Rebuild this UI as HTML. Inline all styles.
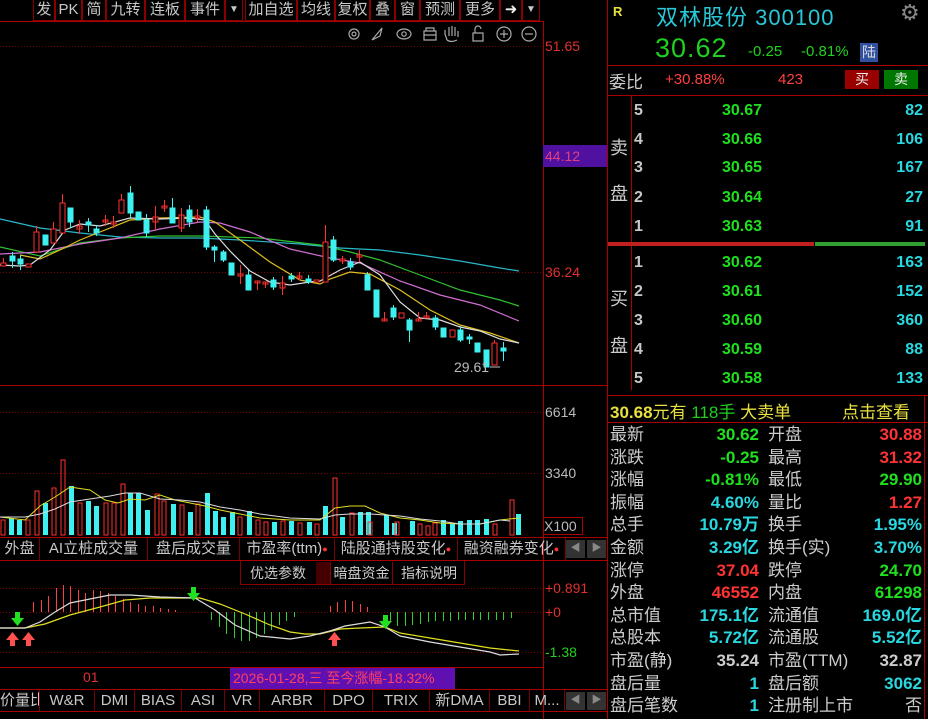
<!DOCTYPE html>
<html><head><meta charset="utf-8"><style>
*{margin:0;padding:0;box-sizing:border-box}
body{width:928px;height:719px;background:#000;overflow:hidden;position:relative;font-family:"Liberation Sans","Noto Sans CJK SC",sans-serif;color:#c8c8c8}
.a{position:absolute;white-space:nowrap}
.tb{position:absolute;top:0;height:21px;border:1px solid #8a0000;border-top:none;color:#c8c8c8;font-size:15px;line-height:20px;text-align:center}
.tab{position:absolute;height:22px;border-right:1px solid #700;font-size:15px;line-height:22px;text-align:center;color:#c8c8c8;white-space:nowrap;overflow:hidden}
.r{position:absolute;font-size:16px;line-height:22px;white-space:nowrap;font-weight:bold}
.g{color:#1ee01e}.rd{color:#ff3333}.c{color:#28d8e0}.w{color:#c8c8c8;font-weight:normal}.y{color:#e8e040}
</style></head><body>
<!-- toolbar -->
<div class="tb" style="left:33px;width:22px">发</div>
<div class="tb" style="left:55px;width:27px">PK</div>
<div class="tb" style="left:82px;width:24px">简</div>
<div class="tb" style="left:106px;width:39px">九转</div>
<div class="tb" style="left:145px;width:40px">连板</div>
<div class="tb" style="left:185px;width:40px">事件</div>
<div class="tb" style="left:225px;width:18px;font-size:10px">▼</div>
<div class="tb" style="left:245px;width:52px">加自选</div>
<div class="tb" style="left:297px;width:38px">均线</div>
<div class="tb" style="left:335px;width:35px">复权</div>
<div class="tb" style="left:370px;width:25px">叠</div>
<div class="tb" style="left:395px;width:25px">窗</div>
<div class="tb" style="left:420px;width:40px">预测</div>
<div class="tb" style="left:460px;width:40px">更多</div>
<div class="tb" style="left:500px;width:22px;color:#eee">➜</div>
<div class="tb" style="left:522px;width:18px;font-size:10px">▼</div>
<svg class="a" style="left:0;top:0" width="928" height="719">
<line x1="0" y1="21.5" x2="543" y2="21.5" stroke="#a00" />
<line x1="543.5" y1="21" x2="543.5" y2="719" stroke="#a00"/>
<line x1="607.5" y1="0" x2="607.5" y2="719" stroke="#a00"/>
<line x1="0" y1="385.5" x2="607" y2="385.5" stroke="#a00"/>
<line x1="0" y1="537.5" x2="607" y2="537.5" stroke="#a00"/>
<line x1="0" y1="560.5" x2="607" y2="560.5" stroke="#a00"/>
<line x1="0" y1="667.5" x2="543" y2="667.5" stroke="#a00"/>
<line x1="0" y1="689.5" x2="607" y2="689.5" stroke="#a00"/>
<line x1="0" y1="711.5" x2="607" y2="711.5" stroke="#a00"/>
<g stroke="#700" stroke-dasharray="1,2">
<line x1="0" y1="46.5" x2="543" y2="46.5"/><line x1="0" y1="272.5" x2="543" y2="272.5"/>
<line x1="0" y1="412.5" x2="543" y2="412.5"/><line x1="0" y1="473.5" x2="543" y2="473.5"/>
<line x1="0" y1="588.5" x2="543" y2="588.5"/><line x1="0" y1="612.5" x2="543" y2="612.5"/><line x1="0" y1="652.5" x2="543" y2="652.5"/>
</g>
<g stroke="#aaa" fill="none" stroke-width="1.2">
<circle cx="354" cy="34" r="5"/><circle cx="354" cy="34" r="2"/>
<path d="M372 40 L382 28 L380 36 Z"/>
<ellipse cx="404" cy="34" rx="7" ry="5"/><circle cx="404" cy="34" r="2.2"/>
<path d="M424 31h12v9h-12z M426 31v-3h8v3 M424 35h12"/>
<path d="M447 40 l-2-6 v-4 M449 36v-9 M452 36v-10 M455 36v-9 M458 37v-6 M447 40 q4 3 10 0"/>
<path d="M473 33h10v8h-10z M475 33v-4a3 3 0 0 1 6 0"/>
<circle cx="504" cy="34" r="7"/><path d="M500 34h8M504 30v8"/>
<circle cx="529" cy="34" r="7"/><path d="M525 34h8"/>
</g>
<g fill="none" stroke-width="1.2">
<polyline stroke="#2ab8c8" points="0,219 40,228 80,233 120,237 160,238 200,238 240,240 300,244 340,248 380,250 420,255 460,261 500,268 519,271"/>
<polyline stroke="#30c030" points="0,247 40,256 80,243 120,238 160,236 200,236 260,238 320,245 350,252 380,260 420,275 460,290 500,300 519,306"/>
<polyline stroke="#d070d0" points="0,254 40,252 80,244 120,238 160,229 200,222 220,223 250,232 290,249 330,258 360,263 400,281 440,295 480,305 519,321"/>
<polyline stroke="#e0c020" points="20,255 40,259 60,250 80,240 100,232 130,220 160,218 200,217 215,222 240,240 270,262 300,280 320,284 330,279 350,272 370,274 400,290 430,310 460,325 490,333 519,343"/>
<polyline stroke="#ddd" points="0,265 20,266 30,265 50,250 65,230 80,224 100,226 130,218 160,219 190,218 205,220 215,234 230,251 250,271 270,282 290,285 310,282 320,281 340,270 360,262 380,275 400,302 420,318 440,320 460,327 480,331 500,339 519,343"/>
</g>
<g stroke-width="1">
<g fill="#000" stroke="#ff3030">
<rect x="1" y="263" width="5" height="3"/><line x1="3.5" y1="258" x2="3.5" y2="263"/>
<rect x="26" y="264" width="5" height="3"/>
<rect x="34" y="232" width="5" height="20"/><line x1="36.5" y1="226" x2="36.5" y2="232"/>
<rect x="51" y="229" width="5" height="14"/><line x1="53.5" y1="222" x2="53.5" y2="229"/>
<rect x="60" y="203" width="5" height="30"/><line x1="62.5" y1="194" x2="62.5" y2="203"/>
<rect x="77" y="226" width="5" height="3"/><line x1="79.5" y1="220" x2="79.5" y2="234"/>
<rect x="103" y="220" width="5" height="2"/><line x1="105.5" y1="215" x2="105.5" y2="226"/>
<rect x="111" y="222" width="5" height="2"/><line x1="113.5" y1="216" x2="113.5" y2="228"/>
<rect x="119" y="200" width="5" height="13"/><line x1="121.5" y1="194" x2="121.5" y2="200"/>
<rect x="153" y="217" width="5" height="5"/><line x1="155.5" y1="206" x2="155.5" y2="230"/>
<rect x="162" y="206" width="5" height="2"/><line x1="164.5" y1="200" x2="164.5" y2="212"/>
<rect x="179" y="215" width="5" height="13"/><line x1="181.5" y1="208" x2="181.5" y2="232"/>
<rect x="195" y="216" width="5" height="2"/><line x1="197.5" y1="209" x2="197.5" y2="222"/>
<rect x="238" y="274" width="5" height="2"/><line x1="240.5" y1="265" x2="240.5" y2="284"/>
<rect x="255" y="281" width="5" height="2"/><line x1="257.5" y1="281" x2="257.5" y2="290"/>
<rect x="263" y="282" width="5" height="2"/><line x1="265.5" y1="282" x2="265.5" y2="288"/>
<rect x="280" y="283" width="5" height="5"/><line x1="282.5" y1="276" x2="282.5" y2="295"/>
<rect x="297" y="276" width="5" height="2"/><line x1="299.5" y1="272" x2="299.5" y2="280"/>
<rect x="314" y="280" width="5" height="2"/>
<rect x="323" y="242" width="5" height="40"/><line x1="325.5" y1="225" x2="325.5" y2="242"/>
<rect x="340" y="259" width="5" height="2"/><line x1="342.5" y1="256" x2="342.5" y2="264"/>
<rect x="357" y="255" width="5" height="2"/><line x1="359.5" y1="250" x2="359.5" y2="262"/>
<rect x="382" y="319" width="5" height="2"/><line x1="384.5" y1="312" x2="384.5" y2="321"/>
<rect x="399" y="313" width="5" height="5"/>
<rect x="416" y="319" width="5" height="2"/><line x1="418.5" y1="312" x2="418.5" y2="321"/>
<rect x="424" y="316" width="5" height="2"/><line x1="426.5" y1="312" x2="426.5" y2="318"/>
<rect x="450" y="330" width="5" height="7"/>
<rect x="492" y="343" width="5" height="22"/><line x1="494.5" y1="340" x2="494.5" y2="343"/>
</g>
<g fill="#3ef0f0" stroke="#3ef0f0">
<rect x="10" y="256" width="5" height="5"/><line x1="12.5" y1="252" x2="12.5" y2="268"/>
<rect x="18" y="259" width="5" height="5"/><line x1="20.5" y1="255" x2="20.5" y2="270"/>
<rect x="43" y="235" width="5" height="10"/>
<rect x="68" y="208" width="5" height="14"/><line x1="70.5" y1="208" x2="70.5" y2="228"/>
<rect x="86" y="222" width="5" height="3"/><line x1="88.5" y1="218" x2="88.5" y2="232"/>
<rect x="94" y="229" width="5" height="4"/><line x1="96.5" y1="225" x2="96.5" y2="236"/>
<rect x="128" y="193" width="5" height="20"/><line x1="130.5" y1="186" x2="130.5" y2="218"/>
<rect x="136" y="212" width="5" height="8"/>
<rect x="144" y="220" width="5" height="13"/><line x1="146.5" y1="214" x2="146.5" y2="237"/>
<rect x="170" y="208" width="5" height="15"/><line x1="172.5" y1="198" x2="172.5" y2="223"/>
<rect x="187" y="210" width="5" height="12"/><line x1="189.5" y1="205" x2="189.5" y2="227"/>
<rect x="204" y="210" width="5" height="37"/><line x1="206.5" y1="206" x2="206.5" y2="250"/>
<rect x="212" y="247" width="5" height="3"/><line x1="214.5" y1="245" x2="214.5" y2="262"/>
<rect x="221" y="252" width="5" height="8"/><line x1="223.5" y1="250" x2="223.5" y2="262"/>
<rect x="229" y="263" width="5" height="12"/>
<rect x="246" y="275" width="5" height="15"/><line x1="248.5" y1="270" x2="248.5" y2="290"/>
<rect x="271" y="280" width="5" height="7"/><line x1="273.5" y1="277" x2="273.5" y2="290"/>
<rect x="289" y="276" width="5" height="3"/><line x1="291.5" y1="273" x2="291.5" y2="282"/>
<rect x="306" y="279" width="5" height="3"/><line x1="308.5" y1="275" x2="308.5" y2="284"/>
<rect x="331" y="240" width="5" height="20"/><line x1="333.5" y1="236" x2="333.5" y2="262"/>
<rect x="348" y="262" width="5" height="5"/><line x1="350.5" y1="258" x2="350.5" y2="270"/>
<rect x="365" y="275" width="5" height="15"/><line x1="367.5" y1="272" x2="367.5" y2="290"/>
<rect x="374" y="290" width="5" height="27"/>
<rect x="391" y="308" width="5" height="9"/><line x1="393.5" y1="305" x2="393.5" y2="320"/>
<rect x="407" y="320" width="5" height="10"/><line x1="409.5" y1="318" x2="409.5" y2="342"/>
<rect x="433" y="318" width="5" height="9"/><line x1="435.5" y1="315" x2="435.5" y2="330"/>
<rect x="441" y="328" width="5" height="9"/>
<rect x="458" y="330" width="5" height="10"/><line x1="460.5" y1="326" x2="460.5" y2="342"/>
<rect x="467" y="337" width="5" height="2"/><line x1="469.5" y1="334" x2="469.5" y2="344"/>
<rect x="475" y="343" width="5" height="9"/>
<rect x="484" y="350" width="5" height="17"/>
<rect x="501" y="348" width="5" height="3"/><line x1="503.5" y1="342" x2="503.5" y2="361"/>
</g>
</g>
<text x="454" y="372" fill="#bbb" font-size="14" font-family="Liberation Sans">29.61</text>
<line x1="490" y1="367" x2="500" y2="367" stroke="#bbb"/>
<g fill="#3ef0f0">
<rect x="9" y="518" width="5" height="17"/><rect x="17" y="520" width="5" height="15"/><rect x="43" y="503" width="5" height="32"/><rect x="69" y="486" width="5" height="49"/><rect x="86" y="501" width="5" height="34"/><rect x="94" y="506" width="5" height="29"/><rect x="128" y="493" width="5" height="42"/><rect x="136" y="493" width="5" height="42"/><rect x="145" y="510" width="5" height="25"/><rect x="171" y="504" width="5" height="31"/><rect x="188" y="512" width="5" height="23"/><rect x="205" y="493" width="5" height="42"/><rect x="213" y="511" width="5" height="24"/><rect x="221" y="517" width="5" height="18"/><rect x="230" y="512" width="5" height="23"/><rect x="247" y="511" width="5" height="24"/><rect x="272" y="522" width="5" height="13"/><rect x="289" y="521" width="5" height="14"/><rect x="307" y="522" width="5" height="13"/><rect x="323" y="506" width="5" height="29"/><rect x="340" y="517" width="5" height="18"/><rect x="358" y="512" width="5" height="23"/><rect x="366" y="512" width="5" height="23"/><rect x="384" y="515" width="5" height="20"/><rect x="392" y="523" width="5" height="12"/><rect x="410" y="521" width="5" height="14"/><rect x="441" y="520" width="5" height="15"/><rect x="450" y="524" width="5" height="11"/><rect x="458" y="521" width="5" height="14"/><rect x="467" y="520" width="5" height="15"/><rect x="475" y="520" width="5" height="15"/><rect x="484" y="519" width="5" height="16"/><rect x="516" y="514" width="5" height="21"/>
</g>
<g fill="none" stroke="#ff3030">
<rect x="1" y="520" width="4" height="15"/><rect x="26" y="520" width="4" height="15"/><rect x="35" y="491" width="4" height="44"/><rect x="52" y="488" width="4" height="47"/><rect x="61" y="460" width="4" height="75"/><rect x="78" y="503" width="4" height="32"/><rect x="104" y="503" width="4" height="32"/><rect x="112" y="503" width="4" height="32"/><rect x="121" y="484" width="4" height="51"/><rect x="155" y="494" width="4" height="41"/><rect x="162" y="501" width="4" height="34"/><rect x="180" y="505" width="4" height="30"/><rect x="196" y="504" width="4" height="31"/><rect x="238" y="517" width="4" height="18"/><rect x="256" y="520" width="4" height="15"/><rect x="264" y="522" width="4" height="13"/><rect x="281" y="521" width="4" height="14"/><rect x="298" y="523" width="4" height="12"/><rect x="315" y="524" width="4" height="11"/><rect x="333" y="478" width="4" height="57"/><rect x="350" y="513" width="4" height="22"/><rect x="368" y="522" width="4" height="13"/><rect x="395" y="522" width="4" height="13"/><rect x="418" y="524" width="4" height="11"/><rect x="426" y="526" width="4" height="9"/><rect x="433" y="523" width="4" height="12"/><rect x="493" y="524" width="4" height="11"/><rect x="510" y="500" width="4" height="35"/>
</g>
<g fill="none" stroke-width="1">
<polyline stroke="#e0e020" points="0,517 25,520 40,506 55,497 70,487 90,490 105,500 118,503 130,499 145,500 160,495 175,500 190,503 205,506 220,510 240,514 260,518 290,520 320,520 335,508 350,506 365,506 380,513 400,518 420,520 440,523 460,524 480,524 500,520 519,518"/>
<polyline stroke="#ddd" points="0,517 25,517 40,514 55,509 70,502 90,499 110,496 125,493 140,493 160,499 180,500 200,502 220,507 240,510 260,514 290,518 320,519 335,515 350,514 370,514 400,516 420,519 440,521 460,524 480,524 500,520 510,521"/>
</g>
<g stroke="#ff4040">
<line x1="33.5" y1="612" x2="33.5" y2="602"/><line x1="41.5" y1="612" x2="41.5" y2="600"/><line x1="48.5" y1="612" x2="48.5" y2="596"/><line x1="56.5" y1="612" x2="56.5" y2="588"/><line x1="63.5" y1="612" x2="63.5" y2="585"/><line x1="70.5" y1="612" x2="70.5" y2="586"/><line x1="78.5" y1="612" x2="78.5" y2="590"/><line x1="85.5" y1="612" x2="85.5" y2="593"/><line x1="93.5" y1="612" x2="93.5" y2="590"/><line x1="100.5" y1="612" x2="100.5" y2="591"/><line x1="108.5" y1="612" x2="108.5" y2="593"/><line x1="115.5" y1="612" x2="115.5" y2="596"/><line x1="123.5" y1="612" x2="123.5" y2="599"/><line x1="130.5" y1="612" x2="130.5" y2="602"/><line x1="138.5" y1="612" x2="138.5" y2="604"/><line x1="145.5" y1="612" x2="145.5" y2="606"/><line x1="153.5" y1="612" x2="153.5" y2="606"/><line x1="160.5" y1="612" x2="160.5" y2="608"/><line x1="168.5" y1="612" x2="168.5" y2="609"/><line x1="175.5" y1="612" x2="175.5" y2="610"/>
<line x1="330.5" y1="612" x2="330.5" y2="606"/><line x1="337.5" y1="612" x2="337.5" y2="602"/><line x1="345.5" y1="612" x2="345.5" y2="600"/><line x1="352.5" y1="612" x2="352.5" y2="601"/><line x1="360.5" y1="612" x2="360.5" y2="604"/><line x1="367.5" y1="612" x2="367.5" y2="607"/>
</g>
<g stroke="#30d030">
<line x1="211.5" y1="612" x2="211.5" y2="620"/><line x1="219.5" y1="612" x2="219.5" y2="627"/><line x1="226.5" y1="612" x2="226.5" y2="634"/><line x1="234.5" y1="612" x2="234.5" y2="638"/><line x1="241.5" y1="612" x2="241.5" y2="641"/><line x1="249.5" y1="612" x2="249.5" y2="641"/><line x1="256.5" y1="612" x2="256.5" y2="638"/><line x1="264.5" y1="612" x2="264.5" y2="634"/><line x1="271.5" y1="612" x2="271.5" y2="630"/><line x1="279.5" y1="612" x2="279.5" y2="625"/><line x1="286.5" y1="612" x2="286.5" y2="621"/><line x1="294.5" y1="612" x2="294.5" y2="617"/>
<line x1="390.5" y1="612" x2="390.5" y2="622"/><line x1="397.5" y1="612" x2="397.5" y2="626"/><line x1="405.5" y1="612" x2="405.5" y2="626"/><line x1="412.5" y1="612" x2="412.5" y2="625"/><line x1="420.5" y1="612" x2="420.5" y2="624"/><line x1="428.5" y1="612" x2="428.5" y2="622"/><line x1="435.5" y1="612" x2="435.5" y2="621"/><line x1="443.5" y1="612" x2="443.5" y2="621"/><line x1="450.5" y1="612" x2="450.5" y2="621"/><line x1="458.5" y1="612" x2="458.5" y2="620"/><line x1="465.5" y1="612" x2="465.5" y2="620"/><line x1="473.5" y1="612" x2="473.5" y2="620"/><line x1="480.5" y1="612" x2="480.5" y2="620"/><line x1="488.5" y1="612" x2="488.5" y2="620"/><line x1="496.5" y1="612" x2="496.5" y2="620"/><line x1="503.5" y1="612" x2="503.5" y2="620"/><line x1="511.5" y1="612" x2="511.5" y2="618"/>
</g>
<g fill="none" stroke-width="1.2">
<polyline stroke="#e0e020" points="0,628 25,628 45,624 70,615 100,607 125,600 150,598 170,598 200,598 220,604 245,614 270,625 290,632 305,634 320,634 340,629 360,628 385,627 400,633 430,638 460,643 490,648 519,651"/>
<polyline stroke="#ddd" points="0,628 25,628 40,622 55,612 70,603 90,599 110,595 130,595 160,597 195,598 215,610 235,625 260,636 290,639 310,636 330,631 345,626 370,622 385,627 400,636 430,642 460,647 490,652 500,655 519,654"/>
</g>
<g fill="#ff5050"><path d="M10 646h5v-6h4l-6.5-8-6.5 8h4z"/><path d="M26 646h5v-6h4l-6.5-8-6.5 8h4z"/><path d="M285 646h5v-6h4l-6.5-8-6.5 8h4z" transform="translate(47,0)"/></g>
<g fill="#20e020"><path d="M17 612h5v6h4l-6.5 8-6.5-8h4z" transform="translate(-2,0)"/><path d="M166 586h5v6h4l-6.5 8-6.5-8h4z" transform="translate(25,1)"/><path d="M385 615h5v6h4l-6.5 8-6.5-8h4z" transform="translate(-2,0)"/></g>
<line x1="607" y1="65.5" x2="928" y2="65.5" stroke="#a00"/>
<line x1="607" y1="95.5" x2="928" y2="95.5" stroke="#a00"/>
<line x1="631.5" y1="96" x2="631.5" y2="390" stroke="#a00"/>
<rect x="608" y="242" width="206" height="4" fill="#c02020"/><rect x="815" y="242" width="110" height="4" fill="#30a030"/>
<line x1="607" y1="395.5" x2="928" y2="395.5" stroke="#a00"/>
<line x1="607" y1="422.5" x2="928" y2="422.5" stroke="#a00"/>
<line x1="924.5" y1="396" x2="924.5" y2="719" stroke="#a00"/>
</svg>
<div class="a" style="left:545px;top:38px;font-size:14px;color:#e03030">51.65</div>
<div class="a" style="left:543px;top:145px;width:64px;height:22px;background:#5010a0;font-size:14px;line-height:22px;color:#e04080;padding-left:2px">44.12</div>
<div class="a" style="left:545px;top:264px;font-size:14px;color:#e03030">36.24</div>
<div class="a" style="left:545px;top:404px;font-size:14px;color:#bbb">6614</div>
<div class="a" style="left:545px;top:465px;font-size:14px;color:#bbb">3340</div>
<div class="a" style="left:543px;top:517px;width:40px;height:18px;border:1px solid #a00;font-size:14px;line-height:16px;color:#bbb">X100</div>
<div class="a" style="left:545px;top:580px;font-size:14px;color:#e03030">+0.891</div>
<div class="a" style="left:545px;top:604px;font-size:14px;color:#e03030">+0</div>
<div class="a" style="left:545px;top:644px;font-size:14px;color:#20d020">-1.38</div>
<div class="tab" style="left:0;top:538px;width:40px">外盘</div>
<div class="tab" style="left:40px;top:538px;width:108px">AI立桩成交量</div>
<div class="tab" style="left:148px;top:538px;width:92px">盘后成交量</div>
<div class="tab" style="left:240px;top:538px;width:95px">市盈率(ttm)<span style="color:#f33;font-size:9px;vertical-align:top">●</span></div>
<div class="tab" style="left:335px;top:538px;width:123px">陆股通持股变化<span style="color:#f33;font-size:9px;vertical-align:top">●</span></div>
<div class="tab" style="left:458px;top:538px;width:108px">融资融券变化<span style="color:#f33;font-size:9px;vertical-align:top">●</span></div>
<div class="a" style="left:566px;top:540px;width:19px;height:18px;background:#333;color:#888;font-size:10px;text-align:center;line-height:18px">◀</div>
<div class="a" style="left:587px;top:540px;width:19px;height:18px;background:#333;color:#888;font-size:10px;text-align:center;line-height:18px">▶</div>
<div class="a" style="left:240px;top:561px;width:225px;height:24px;border:1px solid #800;border-top:none"></div>
<div class="a" style="left:240px;top:562px;width:76px;text-align:center;font-size:14px;line-height:22px;color:#ccc">优选参数</div>
<div class="a" style="left:316px;top:562px;width:14px;height:22px;background:#400"></div>
<div class="a" style="left:330px;top:562px;width:63px;text-align:center;font-size:14px;line-height:22px;color:#ccc;border-left:1px solid #800;border-right:1px solid #800">暗盘资金</div>
<div class="a" style="left:393px;top:562px;width:72px;text-align:center;font-size:14px;line-height:22px;color:#ccc">指标说明</div>
<div class="a" style="left:83px;top:669px;font-size:14px;color:#e03030">01</div>
<div class="a" style="left:230px;top:668px;width:225px;height:21px;background:#6010b0;font-size:14px;line-height:21px;color:#ff4060;padding-left:3px">2026-01-28,三 至今涨幅-18.32%</div>
<div class="tab" style="left:0;top:690px;width:40px;text-align:right;padding-right:3px">价量比</div>
<div class="tab" style="left:40px;top:690px;width:55px">W&amp;R</div>
<div class="tab" style="left:95px;top:690px;width:40px">DMI</div>
<div class="tab" style="left:135px;top:690px;width:47px">BIAS</div>
<div class="tab" style="left:182px;top:690px;width:43px">ASI</div>
<div class="tab" style="left:225px;top:690px;width:35px">VR</div>
<div class="tab" style="left:260px;top:690px;width:65px">ARBR</div>
<div class="tab" style="left:325px;top:690px;width:48px">DPO</div>
<div class="tab" style="left:373px;top:690px;width:57px">TRIX</div>
<div class="tab" style="left:430px;top:690px;width:60px">新DMA</div>
<div class="tab" style="left:490px;top:690px;width:40px">BBI</div>
<div class="tab" style="left:530px;top:690px;width:35px">M...</div>
<div class="a" style="left:566px;top:692px;width:19px;height:18px;background:#333;color:#888;font-size:10px;text-align:center;line-height:18px">◀</div>
<div class="a" style="left:587px;top:692px;width:19px;height:18px;background:#333;color:#888;font-size:10px;text-align:center;line-height:18px">▶</div>
<div class="a" style="left:613px;top:4px;font-size:13px;font-weight:bold;color:#e8e040">R</div>
<div class="a" style="left:656px;top:0;font-size:22px;color:#28c8d8;letter-spacing:1px">双林股份 300100</div>
<div class="a" style="left:900px;top:0;font-size:22px;color:#888">⚙</div>
<div class="a" style="left:655px;top:33px;font-size:27px;color:#20d020;letter-spacing:1px">30.62</div>
<div class="a" style="left:748px;top:43px;font-size:15px;color:#20d020">-0.25</div>
<div class="a" style="left:801px;top:43px;font-size:15px;color:#20d020">-0.81%</div>
<div class="a" style="left:860px;top:43px;width:18px;height:19px;background:#3050a0;font-size:14px;color:#ddd;text-align:center;line-height:19px">陆</div>
<div class="a" style="left:609px;top:68px;font-size:17px;color:#ccc">委比</div>
<div class="a" style="left:665px;top:71px;font-size:15px;color:#ff4040">+30.88%</div>
<div class="a" style="left:778px;top:71px;font-size:15px;color:#ff4040">423</div>
<div class="a" style="left:845px;top:70px;width:34px;height:19px;background:#900;color:#eee;font-size:14px;text-align:center;line-height:19px">买</div>
<div class="a" style="left:884px;top:70px;width:34px;height:19px;background:#070;color:#eee;font-size:14px;text-align:center;line-height:19px">卖</div>
<div class="a" style="left:610px;top:134px;font-size:18px;color:#ccc">卖</div>
<div class="a" style="left:610px;top:180px;font-size:18px;color:#ccc">盘</div>
<div class="a" style="left:610px;top:285px;font-size:18px;color:#ccc">买</div>
<div class="a" style="left:610px;top:332px;font-size:18px;color:#ccc">盘</div>
<div class="r w" style="left:634px;top:100px;font-weight:bold">5</div><div class="r g" style="left:722px;top:100px">30.67</div><div class="r c" style="right:5px;top:100px">82</div>
<div class="r w" style="left:634px;top:129px;font-weight:bold">4</div><div class="r g" style="left:722px;top:129px">30.66</div><div class="r c" style="right:5px;top:129px">106</div>
<div class="r w" style="left:634px;top:157px;font-weight:bold">3</div><div class="r g" style="left:722px;top:157px">30.65</div><div class="r c" style="right:5px;top:157px">167</div>
<div class="r w" style="left:634px;top:187px;font-weight:bold">2</div><div class="r g" style="left:722px;top:187px">30.64</div><div class="r c" style="right:5px;top:187px">27</div>
<div class="r w" style="left:634px;top:216px;font-weight:bold">1</div><div class="r g" style="left:722px;top:216px">30.63</div><div class="r c" style="right:5px;top:216px">91</div>
<div class="r w" style="left:634px;top:252px;font-weight:bold">1</div><div class="r g" style="left:722px;top:252px">30.62</div><div class="r c" style="right:5px;top:252px">163</div>
<div class="r w" style="left:634px;top:281px;font-weight:bold">2</div><div class="r g" style="left:722px;top:281px">30.61</div><div class="r c" style="right:5px;top:281px">152</div>
<div class="r w" style="left:634px;top:310px;font-weight:bold">3</div><div class="r g" style="left:722px;top:310px">30.60</div><div class="r c" style="right:5px;top:310px">360</div>
<div class="r w" style="left:634px;top:339px;font-weight:bold">4</div><div class="r g" style="left:722px;top:339px">30.59</div><div class="r c" style="right:5px;top:339px">88</div>
<div class="r w" style="left:634px;top:368px;font-weight:bold">5</div><div class="r g" style="left:722px;top:368px">30.58</div><div class="r c" style="right:5px;top:368px">133</div>
<div class="a" style="left:610px;top:398px;font-size:17px;color:#e8e040"><b>30.68</b>元有 <span style="color:#20d020">118手</span> 大卖单</div>
<div class="a" style="left:842px;top:398px;font-size:17px;color:#e8e040">点击查看</div>
<div style="position:absolute;left:610px;top:424px;width:312px;font-size:17px;line-height:22.6px;white-space:nowrap">
<div style="position:relative;height:22.6px"><span style="color:#ccc">最新</span><b class="g" style="position:absolute;right:163px">30.62</b><span style="position:absolute;left:158px;color:#ccc">开盘</span><b class="rd" style="position:absolute;right:0">30.88</b></div>
<div style="position:relative;height:22.6px"><span style="color:#ccc">涨跌</span><b class="g" style="position:absolute;right:163px">-0.25</b><span style="position:absolute;left:158px;color:#ccc">最高</span><b class="rd" style="position:absolute;right:0">31.32</b></div>
<div style="position:relative;height:22.6px"><span style="color:#ccc">涨幅</span><b class="g" style="position:absolute;right:163px">-0.81%</b><span style="position:absolute;left:158px;color:#ccc">最低</span><b class="g" style="position:absolute;right:0">29.90</b></div>
<div style="position:relative;height:22.6px"><span style="color:#ccc">振幅</span><b class="c" style="position:absolute;right:163px">4.60%</b><span style="position:absolute;left:158px;color:#ccc">量比</span><b class="rd" style="position:absolute;right:0">1.27</b></div>
<div style="position:relative;height:22.6px"><span style="color:#ccc">总手</span><b class="c" style="position:absolute;right:163px">10.79万</b><span style="position:absolute;left:158px;color:#ccc">换手</span><b class="c" style="position:absolute;right:0">1.95%</b></div>
<div style="position:relative;height:22.6px"><span style="color:#ccc">金额</span><b class="c" style="position:absolute;right:163px">3.29亿</b><span style="position:absolute;left:158px;color:#ccc">换手(实)</span><b class="c" style="position:absolute;right:0">3.70%</b></div>
<div style="position:relative;height:22.6px"><span style="color:#ccc">涨停</span><b class="rd" style="position:absolute;right:163px">37.04</b><span style="position:absolute;left:158px;color:#ccc">跌停</span><b class="g" style="position:absolute;right:0">24.70</b></div>
<div style="position:relative;height:22.6px"><span style="color:#ccc">外盘</span><b class="rd" style="position:absolute;right:163px">46552</b><span style="position:absolute;left:158px;color:#ccc">内盘</span><b class="g" style="position:absolute;right:0">61298</b></div>
<div style="position:relative;height:22.6px"><span style="color:#ccc">总市值</span><b class="c" style="position:absolute;right:163px">175.1亿</b><span style="position:absolute;left:158px;color:#ccc">流通值</span><b class="c" style="position:absolute;right:0">169.0亿</b></div>
<div style="position:relative;height:22.6px"><span style="color:#ccc">总股本</span><b class="c" style="position:absolute;right:163px">5.72亿</b><span style="position:absolute;left:158px;color:#ccc">流通股</span><b class="c" style="position:absolute;right:0">5.52亿</b></div>
<div style="position:relative;height:22.6px"><span style="color:#ccc">市盈(静)</span><b style="position:absolute;right:163px;color:#ccc">35.24</b><span style="position:absolute;left:158px;color:#ccc">市盈(TTM)</span><b style="position:absolute;right:0;color:#ccc">32.87</b></div>
<div style="position:relative;height:22.6px"><span style="color:#ccc">盘后量</span><b class="c" style="position:absolute;right:163px">1</b><span style="position:absolute;left:158px;color:#ccc">盘后额</span><b class="c" style="position:absolute;right:0">3062</b></div>
<div style="position:relative;height:22.6px"><span style="color:#ccc">盘后笔数</span><b class="c" style="position:absolute;right:163px">1</b><span style="position:absolute;left:158px;color:#ccc">注册制上市</span><span style="position:absolute;right:0;color:#ccc">否</span></div>
</div>
</body></html>
